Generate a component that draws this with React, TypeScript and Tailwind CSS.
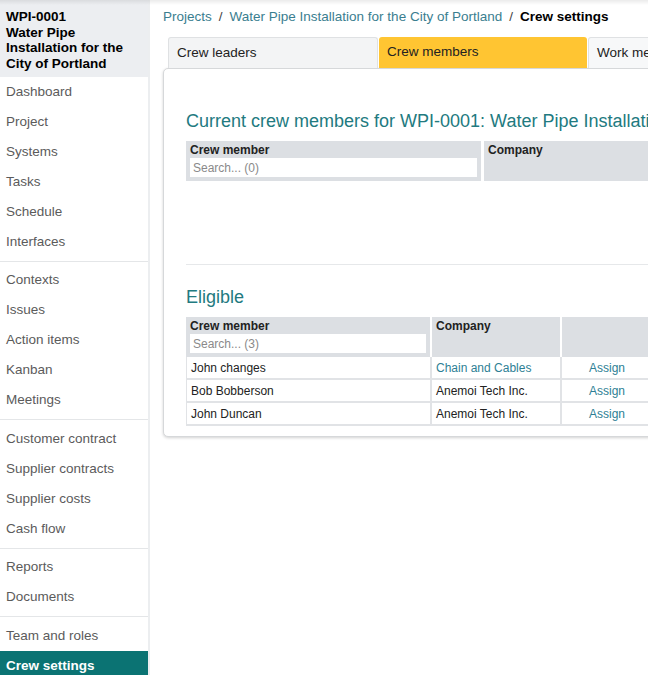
import React from "react";

const groups: string[][] = [
  ["Dashboard", "Project", "Systems", "Tasks", "Schedule", "Interfaces"],
  ["Contexts", "Issues", "Action items", "Kanban", "Meetings"],
  ["Customer contract", "Supplier contracts", "Supplier costs", "Cash flow"],
  ["Reports", "Documents"],
  ["Team and roles", "Crew settings"],
];

const eligible = [
  { name: "John changes", company: "Chain and Cables", link: true },
  { name: "Bob Bobberson", company: "Anemoi Tech Inc.", link: false },
  { name: "John Duncan", company: "Anemoi Tech Inc.", link: false },
];

function Sidebar() {
  return (
    <aside className="w-[150px] shrink-0 bg-white border-r-2 border-[#eceef0] flex flex-col">
      <div className="bg-[#eceef1] px-[6px] pt-[9px] pb-[6px] text-[13.5px] leading-[15.5px] font-bold text-black h-[77px]">
        WPI-0001
        <br />
        Water Pipe Installation for the City of Portland
      </div>
      {groups.map((items, gi) => (
        <div key={gi}>
          {gi > 0 && <div className="mt-[3.5px] mb-[4px] h-px bg-[#e4e6e8]" />}
          {items.map((it) => {
            const active = it === "Crew settings";
            return (
              <div
                key={it}
                className={
                  active
                    ? "h-[30px] px-[6px] flex items-center text-[13.5px] font-bold text-white bg-[#0b7373]"
                    : "h-[30px] px-[6px] flex items-center text-[13.5px] text-[#5b5b5b]"
                }
              >
                {it}
              </div>
            );
          })}
        </div>
      ))}
    </aside>
  );
}

function SearchBox({ text }: { text: string }) {
  return (
    <div className="mt-[1px] h-[19px] bg-white px-[3px] flex items-center text-[12px] text-[#8a8a8a] font-normal">
      {text}
    </div>
  );
}

export default function App() {
  return (
    <div
      className="relative flex h-[675px] overflow-hidden bg-white text-[#222]"
      style={{ fontFamily: '"Liberation Sans", Arial, sans-serif' }}
    >
      <div className="pointer-events-none absolute inset-x-0 top-0 h-[5px] bg-gradient-to-b from-[#00000014] to-transparent" />
      <Sidebar />
      <main className="flex-1 min-w-0 overflow-hidden pl-[13px] pt-[7px]">
        <div className="text-[13.5px] whitespace-nowrap h-[20px] flex items-center gap-[7px]">
          <span className="text-[#3a7e8f]">Projects</span>
          <span className="text-[#444]">/</span>
          <span className="text-[#3a7e8f]">Water Pipe Installation for the City of Portland</span>
          <span className="text-[#444]">/</span>
          <span className="font-bold text-black">Crew settings</span>
        </div>
        <div className="mt-[10px] ml-[5px] flex gap-[1px] h-[31px] w-[700px]">
          <div className="w-[210px] rounded-t-[3px] border border-b-0 border-[#dfe1e3] bg-[#f3f4f5] px-[8px] flex items-center text-[13.5px]">
            Crew leaders
          </div>
          <div className="w-[208px] rounded-t-[3px] bg-[#ffc532] px-[8px] flex items-center text-[13.5px]">
            Crew members
          </div>
          <div className="w-[210px] rounded-t-[3px] border border-b-0 border-[#dfe1e3] bg-[#f7f8f9] px-[8px] flex items-center text-[13.5px]">
            Work members
          </div>
        </div>
        <section className="w-[760px] rounded-[5px] border border-[#d6d8da] shadow-[0_1px_3px_rgba(0,0,0,0.18)] bg-white pl-[22px] pt-[40px] pb-[10px]">
          <h2 className="text-[18px] leading-[24px] text-[#227a80] whitespace-nowrap">
            Current crew members for WPI-0001: Water Pipe Installation for the City of Portland
          </h2>
          <div className="mt-[8px] flex gap-[3px] h-[40px]">
            <div className="w-[295px] bg-[#dcdfe3] px-[4px] pt-[2px]">
              <div className="text-[12px] font-bold leading-[14px]">Crew member</div>
              <SearchBox text="Search... (0)" />
            </div>
            <div className="flex-1 bg-[#dcdfe3] px-[4px] pt-[2px] text-[12px] font-bold leading-[14px]">
              Company
            </div>
          </div>
          <div className="h-[84px] border-b border-[#e6e8ea]" />
          <h2 className="mt-[20px] text-[18px] leading-[24px] text-[#227a80]">Eligible</h2>
          <div className="mt-[8px] flex gap-[2px] h-[40px]">
            <div className="w-[244px] bg-[#dcdfe3] px-[4px] pt-[2px]">
              <div className="text-[12px] font-bold leading-[14px]">Crew member</div>
              <SearchBox text="Search... (3)" />
            </div>
            <div className="w-[128px] bg-[#dcdfe3] px-[4px] pt-[2px] text-[12px] font-bold leading-[14px]">
              Company
            </div>
            <div className="flex-1 bg-[#dcdfe3]" />
          </div>
          {eligible.map((r) => (
            <div
              key={r.name}
              className="flex h-[23px] border-b-2 border-l border-[#e1e3e6] text-[12px]"
            >
              <div className="w-[243px] px-[4px] flex items-center">{r.name}</div>
              <div
                className={
                  "w-[130px] border-l-2 border-[#e1e3e6] px-[4px] flex items-center " +
                  (r.link ? "text-[#2e7f95]" : "")
                }
              >
                {r.company}
              </div>
              <div className="w-[94px] border-l-2 border-r-2 border-[#e1e3e6] flex items-center justify-center text-[#2e7f95]">
                Assign
              </div>
              <div className="flex-1" />
            </div>
          ))}
        </section>
      </main>
    </div>
  );
}
